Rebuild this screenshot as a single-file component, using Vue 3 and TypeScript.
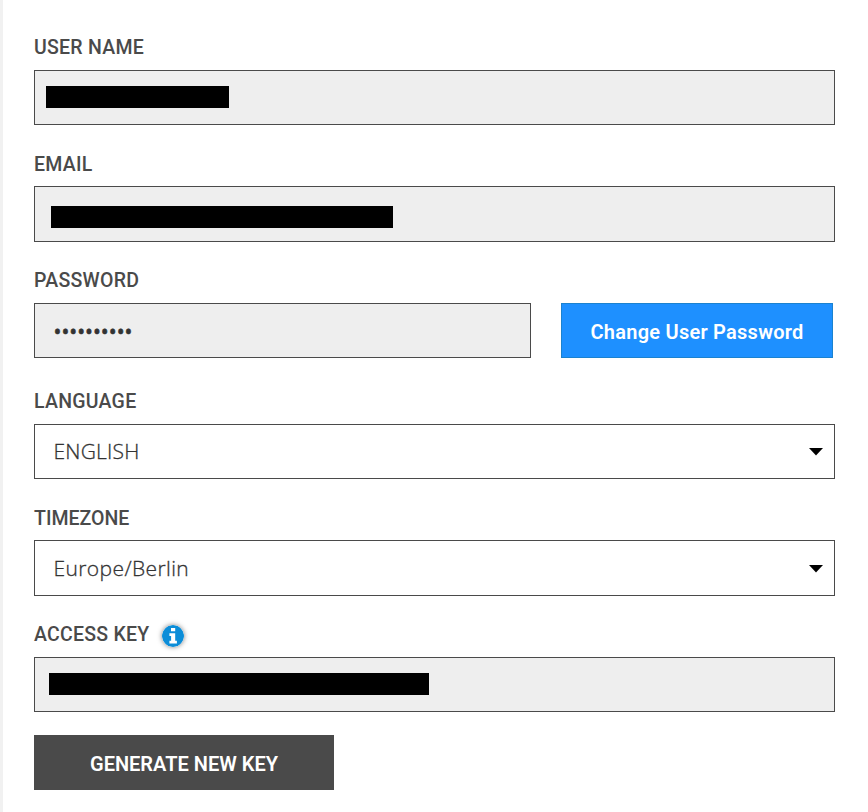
<script setup lang="ts">
interface Field {
  id: string
  label: string
  kind: 'masked' | 'password' | 'select'
  value?: string
  info?: boolean
}

const fields: Field[] = [
  { id: 'username', label: 'USER NAME', kind: 'masked' },
  { id: 'email', label: 'EMAIL', kind: 'masked' },
  { id: 'password', label: 'PASSWORD', kind: 'password', value: '••••••••••' },
  { id: 'language', label: 'LANGUAGE', kind: 'select', value: 'ENGLISH' },
  { id: 'timezone', label: 'TIMEZONE', kind: 'select', value: 'Europe/Berlin' },
  { id: 'access', label: 'ACCESS KEY', kind: 'masked', info: true },
]
</script>

<template>
  <main class="panel">
    <section v-for="f in fields" :key="f.id" class="field" :class="f.id">
      <div class="label">
        <span class="caption">{{ f.label }}</span>
        <svg v-if="f.info" class="info" viewBox="0 0 22 22" width="22" height="22">
          <circle cx="11" cy="11" r="11" fill="#0c8dd8" />
          <path fill="#fff" d="M9 3h4.2v3.2H9zM7.4 8.2h5.8v7.5h1.7v2.9H7.4v-2.9h1.7v-4.6H7.4z" />
        </svg>
      </div>
      <div class="row">
        <div class="box" :class="f.kind">
          <span v-if="f.kind === 'masked'" class="redacted"></span>
          <span v-else class="value">{{ f.value }}</span>
          <svg v-if="f.kind === 'select'" class="arrow" viewBox="0 0 14 8" width="14" height="8">
            <path d="M0 0h14L7 7.6z" />
          </svg>
        </div>
        <button v-if="f.kind === 'password'" class="change" type="button">
          <span>Change User Password</span>
        </button>
      </div>
    </section>
    <button class="generate" type="button"><span>GENERATE NEW KEY</span></button>
  </main>
</template>

<style>
body {
  background: #fff;
}
</style>

<style scoped>
.panel {
  box-sizing: border-box;
  height: 812px;
  padding: 24px 33px 0 31px;
  border-left: 3px solid #f1f1f1;
  overflow: hidden;
  color: #4a4a4a;
}
.field {
  margin-bottom: 15px;
}
.label {
  box-sizing: border-box;
  display: flex;
  align-items: center;
  height: 46px;
  padding-top: 2px;
  font: 500 19.5px/44px Roboto, sans-serif;
  white-space: nowrap;
}
.caption {
  letter-spacing: 0.25px;
}
.row {
  display: flex;
  gap: 30px;
}
.box {
  box-sizing: border-box;
  display: flex;
  align-items: center;
  flex: 1;
  height: 55px;
  border: 1px solid #4a4a4a;
  background: #eee;
}
.box.password {
  flex: none;
  width: 497px;
}
.box.select {
  background: #fff;
  justify-content: space-between;
  padding-right: 11px;
}
.email .box,
.timezone .box {
  height: 56px;
}
.email .label,
.timezone .label {
  padding-top: 4px;
  line-height: 42px;
}
.timezone .caption {
  letter-spacing: 0;
}
.timezone .arrow {
  margin-top: 2px;
}
.password.field {
  margin-bottom: 20px;
}
.access.field {
  margin-bottom: 23px;
}
.redacted {
  height: 22px;
  background: #000;
}
.username .redacted {
  width: 183px;
  margin: 0 0 1px 11px;
}
.email .redacted {
  width: 342px;
  margin: 6px 0 0 16px;
}
.access .redacted {
  width: 380px;
  margin: 0 0 1px 14px;
}
.value {
  margin-left: 18.5px;
  font: 300 21px/28px "Open Sans", "Noto Sans", sans-serif;
  color: #333;
  -webkit-text-stroke: 0.3px #333;
  letter-spacing: 0.2px;
}
.language .value {
  margin-bottom: 2px;
}
.timezone .value {
  letter-spacing: 0.4px;
}
.password .value {
  font-weight: 400;
  letter-spacing: 0;
  -webkit-text-stroke-width: 0.6px;
}
.info {
  margin: 1px 0 0 12.5px;
  border-radius: 50%;
  box-shadow: 0 0 5px rgba(0, 0, 0, 0.5);
}
button {
  box-sizing: border-box;
  height: 55px;
  padding: 2px 0 0;
  color: #fff;
  font: 600 20px/24px Roboto, sans-serif;
  white-space: nowrap;
}
.change {
  width: 272px;
  border: 1px solid #1b82cf;
  background: #1e90ff;
  letter-spacing: 0.25px;
}
.generate {
  display: block;
  width: 300px;
  border: 0;
  background: #4a4a4a;
}
</style>
